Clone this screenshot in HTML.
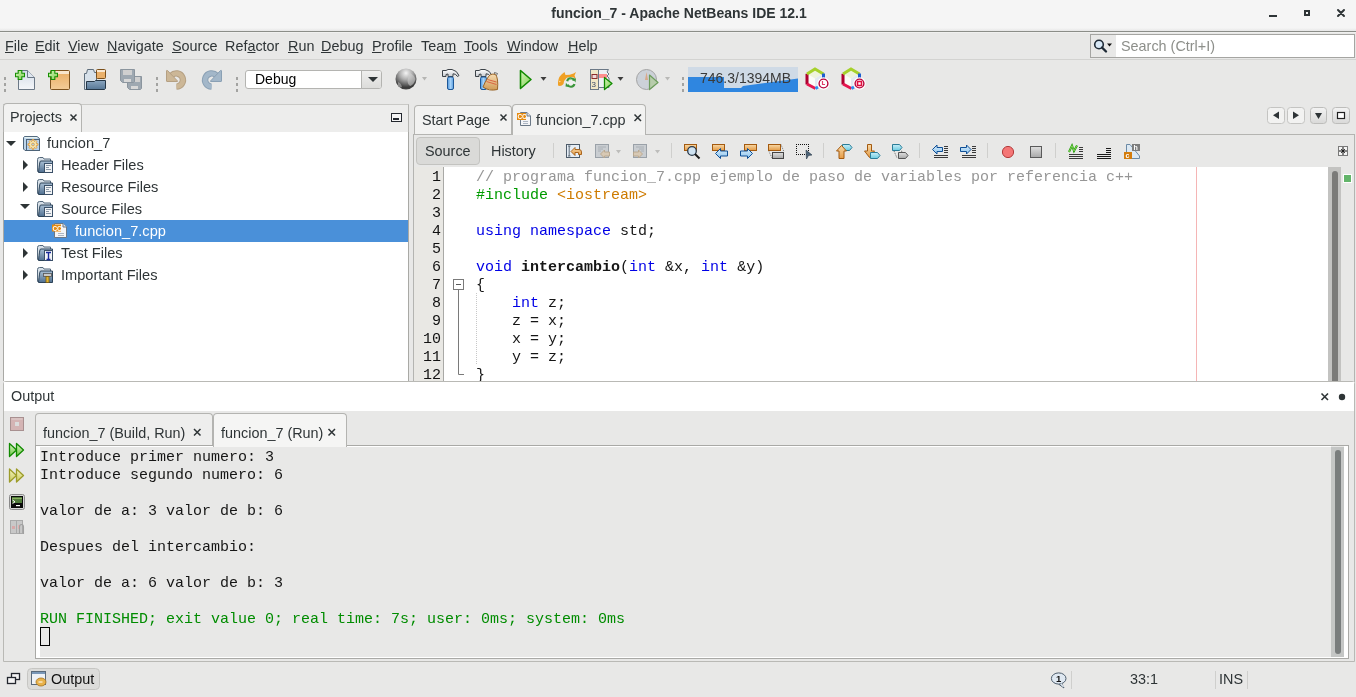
<!DOCTYPE html>
<html><head><meta charset="utf-8">
<style>
*{margin:0;padding:0;box-sizing:border-box}
html,body{width:1356px;height:697px;overflow:hidden;background:#e8e8e7;font-family:"Liberation Sans",sans-serif;color:#2e3436}
.a{position:absolute;will-change:transform}
#title{left:0;top:0;width:1356px;height:32px;background:linear-gradient(#f5f5f5 0,#f5f5f5 28px,#e6e6e6 31px);border-bottom:1px solid #8b8d88}
#title .t{left:1px;width:1356px;top:5px;text-align:center;font-weight:bold;font-size:14px;color:#2e3436;padding-left:0px}
#menu{left:0;top:32px;width:1356px;height:28px;background:#e8e8e7;border-top:1px solid #f0f0ef;border-bottom:1px solid #d3d3d1}
.mi{top:5px;font-size:14.4px;color:#2e3436;line-height:17px}
.mi u{text-decoration:underline;text-decoration-thickness:1px;text-underline-offset:1px}
.mono{font-family:"Liberation Mono",monospace}
.grip{width:2px;height:14px;background:repeating-linear-gradient(#9a9a98 0 2px,transparent 2px 6px)}
/* projects */
#proj{left:3px;top:104px;width:406px;height:277px;border:1px solid #a9a9a5;border-top:none;border-bottom:none;background:#fff}
#projtabs{left:3px;top:104px;width:406px;height:28px;background:#ededec;border-top:1px solid #c9c9c6;border-right:1px solid #b6b6b3}
.ptab{background:#f2f2f1;border:1px solid #b4b4b1;border-bottom:none;border-radius:4px 4px 0 0}
.tt{font-size:14.4px;color:#2e3436;white-space:nowrap}
.tr{height:22px;font-size:14.6px;color:#2e3436;white-space:nowrap;line-height:22px}
.sel{background:#4a90d9;color:#fff}
/* editor */
#edframe{left:413px;top:134px;width:942px;height:248px;border:1px solid #b4b4b1;border-bottom:none;background:#e8e8e7}
#gutter{left:414px;top:167px;width:30px;height:214px;background:#e9e8e4;border-right:1px solid #a9a9a6}
#code{left:444px;top:167px;width:884px;height:214px;background:#fff;overflow:hidden}
.ln{font-family:"Liberation Mono",monospace;font-size:15px;line-height:18px;color:#111;text-align:right;width:27px}
.cl{font-family:"Liberation Mono",monospace;font-size:15px;line-height:18px;color:#161616;white-space:pre}
.cm{color:#969696}.pp{color:#009b00}.st{color:#ce7b00}.kw{color:#0000e6}.b{font-weight:bold}
/* output */
#out{left:3px;top:381px;width:1352px;height:281px;border:1px solid #b9b9b5;border-radius:3px 3px 0 0;background:#e8e8e7}
#outhdr{left:4px;top:382px;width:1350px;height:29px;background:#fff}
.ol{font-family:"Liberation Mono",monospace;font-size:15px;line-height:18px;color:#161616;white-space:pre}
</style></head><body>
<div id="title" class="a"><div class="t a">funcion_7 - Apache NetBeans IDE 12.1</div></div>
<div id="menu" class="a">
<div class="mi a" style="left:5px"><u>F</u>ile</div>
<div class="mi a" style="left:35px"><u>E</u>dit</div>
<div class="mi a" style="left:68px"><u>V</u>iew</div>
<div class="mi a" style="left:107px"><u>N</u>avigate</div>
<div class="mi a" style="left:172px"><u>S</u>ource</div>
<div class="mi a" style="left:225px">Ref<u>a</u>ctor</div>
<div class="mi a" style="left:288px"><u>R</u>un</div>
<div class="mi a" style="left:321px"><u>D</u>ebug</div>
<div class="mi a" style="left:372px"><u>P</u>rofile</div>
<div class="mi a" style="left:421px">Tea<u>m</u></div>
<div class="mi a" style="left:464px"><u>T</u>ools</div>
<div class="mi a" style="left:507px"><u>W</u>indow</div>
<div class="mi a" style="left:568px"><u>H</u>elp</div>
</div>
<div class="a" style="left:1269px;top:15px;width:8px;height:2px;background:#2e3436"></div>
<div class="a" style="left:1304px;top:10px;width:6px;height:6px;border:2px solid #2e3436"></div>
<svg class="a" style="left:1336px;top:8px" width="10" height="10"><path d="M2 2L8 8M8 2L2 8" stroke="#2e3436" stroke-width="2" stroke-linecap="round"/></svg>
<div class="a" style="left:1090px;top:34px;width:265px;height:24px;border:1px solid #a5a5a2;background:#fff"></div>
<div class="a" style="left:1091px;top:35px;width:25px;height:22px;background:#e8e8e7"></div>
<div class="a" style="left:1121px;top:38px;font-size:14.4px;color:#8d8f8a;white-space:nowrap">Search (Ctrl+I)</div>

<svg class="a" style="left:0;top:0" width="1356" height="102" viewBox="0 0 1356 102">
<defs>
<linearGradient id="gPage" x1="0" y1="0" x2="0" y2="1"><stop offset="0" stop-color="#d3dce8"/><stop offset="1" stop-color="#f4f6f9"/></linearGradient>
<linearGradient id="gOrange" x1="0" y1="0" x2="0" y2="1"><stop offset="0" stop-color="#e9ad62"/><stop offset="1" stop-color="#f3cc98"/></linearGradient>
<linearGradient id="gGreen" x1="0" y1="0" x2="1" y2="1"><stop offset="0" stop-color="#d6f5b8"/><stop offset="1" stop-color="#7fcf55"/></linearGradient>
<linearGradient id="gBlueF" x1="0" y1="0" x2="0" y2="1"><stop offset="0" stop-color="#8aa5bf"/><stop offset="1" stop-color="#577796"/></linearGradient>
<radialGradient id="gGlobe" cx="0.5" cy="0.22" r="0.85"><stop offset="0" stop-color="#f4f4f4"/><stop offset="0.35" stop-color="#b0b0b0"/><stop offset="0.8" stop-color="#3a3a3a"/><stop offset="1" stop-color="#4a4a4a"/></radialGradient>
<linearGradient id="gHead" x1="0" y1="0" x2="0" y2="1"><stop offset="0" stop-color="#ffffff"/><stop offset="1" stop-color="#c9cdd2"/></linearGradient>
<linearGradient id="gHandle" x1="0" y1="0" x2="1" y2="0"><stop offset="0" stop-color="#4f96dc"/><stop offset="0.5" stop-color="#a6d2f8"/><stop offset="1" stop-color="#5a9edf"/></linearGradient>
<linearGradient id="gBroom" x1="0" y1="0" x2="0" y2="1"><stop offset="0" stop-color="#f6dcb2"/><stop offset="1" stop-color="#d09a55"/></linearGradient>
<symbol id="plus" viewBox="0 0 11 11"><path d="M3.5 0.5h4v3h3v4h-3v3h-4v-3h-3v-4h3z" fill="url(#gGreen)" stroke="#138f00" stroke-width="1.2"/></symbol>
</defs>
<!-- grips -->
<g fill="#a3a3a1">
<rect x="4" y="77" width="2" height="3"/><rect x="4" y="83" width="2" height="3"/><rect x="4" y="89" width="2" height="3"/>
<rect x="156" y="77" width="2" height="3"/><rect x="156" y="83" width="2" height="3"/><rect x="156" y="89" width="2" height="3"/>
<rect x="236" y="77" width="2" height="3"/><rect x="236" y="83" width="2" height="3"/><rect x="236" y="89" width="2" height="3"/>
<rect x="682" y="77" width="2" height="3"/><rect x="682" y="83" width="2" height="3"/><rect x="682" y="89" width="2" height="3"/>
</g>
<!-- new file -->
<path d="M18.5 70.5H27.5L34.5 77.5V89.5H18.5Z" fill="url(#gPage)" stroke="#6b7886"/>
<path d="M27.5 70.5V77.5H34.5" fill="#dfe6ef" stroke="#6b7886"/>
<use href="#plus" x="15" y="70" width="10" height="10"/>
<!-- new project -->
<rect x="50.5" y="70.5" width="19" height="19" rx="1" fill="url(#gOrange)" stroke="#7d531f"/>
<rect x="51" y="71" width="18" height="3" fill="#f8e6cc"/>
<use href="#plus" x="48" y="70" width="10" height="10"/>
<!-- open project -->
<path d="M84.5 73.5H86.5L87.5 69.5H93.5L94.5 72.5H96.5V89.5H84.5Z" fill="#d7e1ea" stroke="#5d6d7c"/>
<rect x="96.5" y="69.5" width="9" height="9" rx="1" fill="#eab06a" stroke="#7a4f1b"/>
<rect x="97" y="70" width="8" height="2" fill="#f9e8d2"/>
<path d="M86.5 81.5H94.5L95.5 80.5H105.5V88.5L104.5 89.5H86.5Z" fill="url(#gBlueF)" stroke="#263747"/>
<!-- save all (disabled) -->
<g fill="#9ea8b1" stroke="#8b959e">
<path d="M127.5 76.5H141.5V88.5L140.5 89.5H129.5L127.5 87.5Z"/>
<path d="M120.5 69.5H134.5V81.5L133.5 82.5H122.5L120.5 80.5Z"/>
</g>
<rect x="123" y="70" width="9" height="5" fill="#cfcfcf"/><rect x="124" y="79" width="7" height="3" fill="#d8d8d8"/>
<rect x="135" y="77" width="5" height="5" fill="#cfcfcf"/><rect x="131" y="86" width="7" height="3" fill="#d8d8d8"/>
<!-- undo -->
<path d="M171.5 75.5 A6.6 6.6 0 1 1 176.5 86.6" fill="none" stroke="#b5a083" stroke-width="6.4"/>
<path d="M171.5 75.5 A6.6 6.6 0 1 1 176.5 86.6" fill="none" stroke="#ccb797" stroke-width="4.4"/>
<path d="M166.5 71 Q166.5 70 167.5 70.5 L177.5 81 Q178 81.5 177 81.5 L167 81.5 Q166.5 81.5 166.5 81Z" fill="#ccb797" stroke="#b5a083"/>
<!-- redo -->
<path d="M216.5 75.5 A6.6 6.6 0 1 0 211.5 86.6" fill="none" stroke="#8aa0b4" stroke-width="6.4"/>
<path d="M216.5 75.5 A6.6 6.6 0 1 0 211.5 86.6" fill="none" stroke="#a3b7c9" stroke-width="4.4"/>
<path d="M221.5 71 Q221.5 70 220.5 70.5 L210.5 81 Q210 81.5 211 81.5 L221 81.5 Q221.5 81.5 221.5 81Z" fill="#a3b7c9" stroke="#8aa0b4"/>
<!-- globe -->
<circle cx="406" cy="79" r="10.5" fill="url(#gGlobe)"/>
<path d="M410 73 q4 2 5.5 6 q-1 5 -5 7 q-3 -1 -3 -6 q1 -4 2.5 -7z" fill="#d2d2d2" opacity="0.55"/><path d="M398 82 q3 1 4 5 q-2 1 -4 -1z" fill="#b8b8b8" opacity="0.6"/>
<path d="M422 77h5l-2.5 3.5z" fill="#b5b5b3"/>
<!-- hammer -->
<path d="M442.5 70.5 H446 Q447 69 452 69.5 Q457 70.5 459 75.5 L457.5 76.5 Q455.5 73.5 453 73.8 V76.5 H448 V74 L446 74.5 V76.5 H442.5 Z" fill="url(#gHead)" stroke="#3c4248" stroke-linejoin="round"/>
<rect x="447.5" y="77" width="6" height="12.5" rx="1.5" fill="url(#gHandle)" stroke="#1d5797"/>
<!-- clean & build -->
<path d="M475.5 70.5 H479 Q480 69 485 69.5 Q490 70.5 492 75.5 L490.5 76.5 Q488.5 73.5 486 73.8 V76.5 H481 V74 L479 74.5 V76.5 H475.5 Z" fill="url(#gHead)" stroke="#3c4248" stroke-linejoin="round"/>
<rect x="480.5" y="77" width="6" height="12.5" rx="1.5" fill="url(#gHandle)" stroke="#1d5797"/>
<path d="M494.5 72.5 L497.5 73.5 L495 78Z" fill="#e8e8e8" stroke="#555" stroke-width="0.8"/>
<path d="M487 79 Q490 72.5 495.5 74.5 Q498.5 78 497.5 89.5 Q489 91.5 483 87 Q484.5 83 487 79Z" fill="url(#gBroom)" stroke="#9a6426"/>
<path d="M487.5 79.5 L496.5 82 M486.5 81.5 L496.5 84.5" stroke="#d85a3a" stroke-width="0.9"/>
<!-- run -->
<path d="M520.5 70.5 L531 79.5 L520.5 88.5Z" fill="url(#gGreen)" stroke="#118a00" stroke-width="1.6" stroke-linejoin="round"/>
<path d="M540.5 77h6l-3 3.8z" fill="#3c3c3c"/>
<!-- apply code changes fish -->
<path d="M558 85.5 Q557.5 78 561.5 74.5 L564.5 72 L565.5 75 Q570 75 573.5 73.5 L576 72 L574.5 75.5 L575.8 78.8 L573 77.2 Q569 76.5 566.5 78 Q564 80 563.5 84 Q561 86.8 558 85.5Z" fill="#f0a024"/>
<circle cx="559.8" cy="81.5" r="0.7" fill="#fbe0b0"/>
<circle cx="570.8" cy="82.6" r="4.6" fill="#fff" opacity="0.35"/>
<path d="M567.2 81.2 A3.6 3.6 0 0 1 574 80.6" fill="none" stroke="#3c963c" stroke-width="2.2"/>
<path d="M574.4 84 A3.6 3.6 0 0 1 567.6 84.6" fill="none" stroke="#3c963c" stroke-width="2.2"/>
<path d="M572.5 78.2 L576 78.5 L575.5 82.5Z" fill="#3c963c"/>
<path d="M569 87 L565.5 86.6 L566 82.8Z" fill="#3c963c"/>
<path d="M568.5 80.5 A2.8 2.8 0 0 1 572.5 79.8" fill="none" stroke="#a6dca6" stroke-width="0.8"/>
<!-- test/profile -->
<rect x="590.5" y="69.5" width="8" height="20" fill="#f1e7c6" stroke="#6b7886"/>
<path d="M598.5 69.5H608.5L607 72L609 74L607 76L609 78V87.5H598.5Z" fill="#eef0f4" stroke="#6b7886"/>
<rect x="599" y="74" width="8" height="4" fill="#ff8f8f"/>
<rect x="592" y="74.5" width="5" height="4" fill="#f0d8d8" stroke="#8a2a2a"/>
<text x="591.5" y="87" font-family="Liberation Sans" font-size="8" fill="#3a4a6a">3</text>
<path d="M604.5 77.5 L612 83.5 L604.5 89.5Z" fill="url(#gGreen)" stroke="#118a00" stroke-width="1.3" stroke-linejoin="round"/>
<path d="M617.5 77h6l-3 3.8z" fill="#3c3c3c"/>
<!-- profile clock -->
<circle cx="646.5" cy="79.5" r="10" fill="#ccd1d8" stroke="#a3a3a3"/>
<path d="M646.5 72 L648 80 H645Z" fill="#d9a88a"/>
<path d="M649.5 75 L658 82.5 L649.5 89.5Z" fill="#b7ccab" stroke="#6d9d5d" stroke-width="1.2" stroke-linejoin="round"/>
<path d="M665 77h5l-2.5 3.5z" fill="#b9b9b7"/>
<!-- memory bar -->
<rect x="688" y="67" width="110" height="25" fill="#cfdae6"/>
<path d="M688 77 H724 V88 H741 L743 86 L798 78.5 V92 H688Z" fill="#2f86e0"/>
<!-- nb icons -->
<g id="nb1">
<path d="M808.5 74.5 L815 70.5 L821.5 74.5 V83.5 L815 87.5 L808.5 83.5Z" fill="#fbfcf8"/>
<path d="M808.5 74.5 L815 70.5 L821.5 74.5 L815 78.5Z" fill="#eef4dc"/>
<path d="M815 78.5 L821.5 74.5 V83.5 L815 87.5Z" fill="#e2eaf2"/>
<path d="M807 84.5 V73.8" stroke="#ae0030" stroke-width="3" fill="none"/>
<path d="M807 74 L815 69 L823.5 74" stroke="#a6d12b" stroke-width="3" fill="none" stroke-linejoin="miter"/>
<path d="M807 84 L815.5 88.5" stroke="#e5164f" stroke-width="3" fill="none"/>
<path d="M823.5 73.5 V79" stroke="#1c5ed0" stroke-width="3" fill="none"/>
<path d="M815.5 88.5 L818 87" stroke="#2b8ef0" stroke-width="3" fill="none"/>
<circle cx="823.5" cy="83.5" r="6.2" fill="#fff"/>
<circle cx="823.5" cy="83.5" r="4.4" fill="none" stroke="#b8063d" stroke-width="1.4"/>
</g>
<path d="M822.5 81 V84.5 H825" fill="none" stroke="#e0406a" stroke-width="1.2"/>
<use href="#nb1" x="36" y="0"/>
<rect x="857.5" y="81.5" width="4" height="4" fill="#fff" stroke="#e01040" stroke-width="1.6"/>
</svg>
<div class="a" style="left:245px;top:70px;width:137px;height:19px;border:1px solid #b4b4b1;border-radius:3px;background:#fff"></div>
<div class="a" style="left:361px;top:71px;width:20px;height:17px;border-left:1px solid #b4b4b1;background:linear-gradient(#efefee,#dcdcda);border-radius:0 2px 2px 0"></div>
<svg class="a" style="left:366px;top:75px" width="14" height="8"><path d="M2 2h10l-5 5z" fill="#2e3436"/></svg>
<div class="a" style="left:255px;top:71px;font-size:14px;color:#000;white-space:nowrap">Debug</div>
<div class="a" style="left:700px;top:70px;font-size:14px;color:#3a3a3a;white-space:nowrap">746.3/1394MB</div>

<!-- projects panel -->
<div id="proj" class="a"></div>
<div id="projtabs" class="a"></div>
<div class="a ptab" style="left:3px;top:103px;width:79px;height:29px;z-index:1"></div>
<div class="a tt" style="left:10px;top:109px;z-index:2">Projects</div>
<div class="a" style="left:4px;top:220px;width:404px;height:22px;background:#4a90d9"></div>
<div class="a tr" style="left:47px;top:132px">funcion_7</div>
<div class="a tr" style="left:61px;top:154px">Header Files</div>
<div class="a tr" style="left:61px;top:176px">Resource Files</div>
<div class="a tr" style="left:61px;top:198px">Source Files</div>
<div class="a tr" style="left:75px;top:220px;color:#fff">funcion_7.cpp</div>
<div class="a tr" style="left:61px;top:242px">Test Files</div>
<div class="a tr" style="left:61px;top:264px">Important Files</div>
<svg class="a" style="left:0;top:130px" width="80" height="160" viewBox="0 130 80 160">
<defs>
<linearGradient id="gFold" x1="0" y1="0" x2="0" y2="1"><stop offset="0" stop-color="#a9bfd4"/><stop offset="1" stop-color="#4f6f90"/></linearGradient>
<symbol id="folder" viewBox="0 0 16 16">
<path d="M0.5 2.5 Q0.5 0.5 2.5 0.5 H6 L7 2 H13.5 V14.5 H0.5Z" fill="#d7e0e8" stroke="#55697c"/>
<path d="M1.5 15.5 Q2.5 4.5 3.5 4 H15.5 V15.5Z" fill="url(#gFold)" stroke="#2c4358"/>
</symbol>
<symbol id="fdoc" viewBox="0 0 16 16">
<use href="#folder" width="16" height="16"/>
<rect x="7.5" y="6.5" width="8" height="9" fill="#f2f4f6" stroke="#3b5068"/>
<path d="M9 8.5h5M9 10.5h3M9 12.5h5" stroke="#8a98a8" stroke-width="1"/>
</symbol>
</defs>
<!-- arrows -->
<path d="M6 141h10l-5 5z" fill="#2e3436"/>
<path d="M23 160v10l5-5z" fill="#2e3436"/>
<path d="M23 182v10l5-5z" fill="#2e3436"/>
<path d="M20 204h10l-5 5z" fill="#2e3436"/>
<path d="M23 248v10l5-5z" fill="#2e3436"/>
<path d="M23 270v10l5-5z" fill="#2e3436"/>
<!-- project icon -->
<path d="M23.5 137.5 L24.5 136.5 H37 L39.5 138.5 V150.5 H25 L23.5 149Z" fill="#bcd4ea" stroke="#4d6378"/>
<rect x="26.5" y="139.5" width="13" height="11" fill="#b4d2f0" stroke="#4d6378"/>
<path d="M25 137.6 H37.3" stroke="#e4f2f2" stroke-width="1.3"/>
<path d="M32.21 140.99 L32.20 139.56 L33.80 139.56 L33.79 140.99 L34.93 141.46 L35.93 140.45 L37.05 141.57 L36.04 142.57 L36.51 143.71 L37.94 143.70 L37.94 145.30 L36.51 145.29 L36.04 146.43 L37.05 147.43 L35.93 148.55 L34.93 147.54 L33.79 148.01 L33.80 149.44 L32.20 149.44 L32.21 148.01 L31.07 147.54 L30.07 148.55 L28.95 147.43 L29.96 146.43 L29.49 145.29 L28.06 145.30 L28.06 143.70 L29.49 143.71 L29.96 142.57 L28.95 141.57 L30.07 140.45 L31.07 141.46Z" fill="#f3e7b4" stroke="#e29a36" stroke-width="0.9" stroke-linejoin="round"/>
<circle cx="33" cy="144.5" r="1.4" fill="#a9d0f2" stroke="#e29a36" stroke-width="0.8"/>
<!-- folders -->
<use href="#fdoc" x="37" y="157" width="16" height="16"/>
<use href="#fdoc" x="37" y="179" width="16" height="16"/>
<use href="#fdoc" x="37" y="201" width="16" height="16"/>
<use href="#folder" x="37" y="245" width="16" height="16"/>
<rect x="44.5" y="250.5" width="8" height="10" fill="#f2f4f6" stroke="#3b5068"/>
<path d="M46 252.5h5M48.5 252.5v7M46.5 259.5h4" stroke="#1a2a9a" stroke-width="1.4"/>
<use href="#folder" x="37" y="267" width="16" height="16"/>
<rect x="43.5" y="273.5" width="8" height="3" fill="#c9c9c9" stroke="#555" stroke-width="0.8"/>
<rect x="46" y="276.5" width="3" height="6" fill="#e0b430" stroke="#7a5a10" stroke-width="0.8"/>
<!-- cpp file icon -->
<path d="M54.5 223.5 H63 L66.5 227 V237.5 H54.5Z" fill="#f4f5f7" stroke="#6b7886"/>
<path d="M63 223.5 V227 H66.5" fill="#dde3ea" stroke="#6b7886"/>
<path d="M58 233.5h6M58 235.5h6" stroke="#9aa6b4" stroke-width="0.8"/>
<rect x="52" y="224.5" width="9" height="7" fill="#e58a0f"/>
<text x="52.6" y="230.6" font-family="Liberation Sans" font-size="6.4" font-weight="bold" fill="#fff" letter-spacing="-0.3">CC</text>
</svg>
<div class="a" style="left:391px;top:113px;width:11px;height:9px;border:1px solid #23272e;background:#f4f4f4;z-index:3"></div>
<div class="a" style="left:393px;top:118px;width:6px;height:2px;background:#23272e;z-index:3"></div>
<svg class="a" style="left:69px;top:113px;z-index:3" width="10" height="10"><path d="M1.5 1.5L7.5 7.5M7.5 1.5L1.5 7.5" stroke="#2e3436" stroke-width="1.5"/></svg>

<!-- editor -->
<div class="a ptab" style="left:414px;top:105px;width:98px;height:29px"></div>
<div class="a tt" style="left:422px;top:112px">Start Page</div>
<div class="a ptab" style="left:512px;top:104px;width:134px;height:31px;z-index:2"></div>
<div class="a tt" style="left:536px;top:112px;z-index:3">funcion_7.cpp</div>
<div id="edframe" class="a"></div>
<div class="a" style="left:416px;top:137px;width:64px;height:28px;border:1px solid #c3c3c0;border-radius:4px;background:#dadad8"></div>
<div class="a tt" style="left:425px;top:143px">Source</div>
<div class="a tt" style="left:491px;top:143px">History</div>
<svg class="a" style="left:0;top:100px;z-index:5" width="1356" height="67" viewBox="0 100 1356 67">
<defs>
<linearGradient id="gOr2" x1="0" y1="0" x2="0" y2="1"><stop offset="0" stop-color="#f8d9a8"/><stop offset="1" stop-color="#e49b45"/></linearGradient>
<linearGradient id="gBl2" x1="0" y1="0" x2="0" y2="1"><stop offset="0" stop-color="#d8ecfb"/><stop offset="1" stop-color="#8cc4ee"/></linearGradient>
<linearGradient id="gCy" x1="0" y1="0" x2="0" y2="1"><stop offset="0" stop-color="#c8eef8"/><stop offset="1" stop-color="#6ccbe0"/></linearGradient>
<linearGradient id="gGr2" x1="0" y1="0" x2="0" y2="1"><stop offset="0" stop-color="#e0e0e0"/><stop offset="1" stop-color="#a8a8a8"/></linearGradient>
<linearGradient id="gBtn" x1="0" y1="0" x2="0" y2="1"><stop offset="0" stop-color="#f3f3f3"/><stop offset="1" stop-color="#d9d9d8"/></linearGradient>
<symbol id="orect" viewBox="0 0 13 7"><rect x="0.5" y="0.5" width="12" height="6" fill="url(#gOr2)" stroke="#a35a10"/></symbol>
</defs>
<!-- separators -->
<g fill="#cfcfcd">
<rect x="553" y="143" width="1" height="15"/><rect x="671" y="143" width="1" height="15"/>
<rect x="823" y="143" width="1" height="15"/><rect x="919" y="143" width="1" height="15"/>
<rect x="987" y="143" width="1" height="15"/><rect x="1055" y="143" width="1" height="15"/>
</g>
<!-- last edit -->
<rect x="566.5" y="144.5" width="13" height="13" fill="#e6eef6" stroke="#4e5c6a"/>
<path d="M568 146h2.5M569.2 146v10M568 156h2.5" stroke="#4e5c6a" stroke-width="0.9"/>
<path d="M571 151.5 L575 147.5 V149.5 H579 Q581.5 149.5 581.5 152 V154.5 H578.5 V152.5 H575 V155.5Z" fill="url(#gOr2)" stroke="#a35a10" stroke-width="0.9"/>
<!-- back/forward disabled -->
<rect x="595.5" y="144.5" width="13" height="13" fill="#c9cdd1" stroke="#9aa1a8"/>
<path d="M598 147h8M598 149h5M598 151h3" stroke="#aab0b6" stroke-width="1"/>
<path d="M600.5 154 L604.5 150 V152 H609.5 V156 H604.5 V158Z" fill="#d8c9b4" stroke="#b8a68c" stroke-width="0.9"/>
<path d="M616 150h5l-2.5 3.5z" fill="#bdbdbb"/>
<rect x="633.5" y="144.5" width="13" height="13" fill="#c9cdd1" stroke="#9aa1a8"/>
<path d="M636 147h8M639 149h5M641 151h3" stroke="#aab0b6" stroke-width="1"/>
<path d="M642.5 154 L638.5 150 V152 H633.5 V156 H638.5 V158Z" fill="#d8c9b4" stroke="#b8a68c" stroke-width="0.9"/>
<path d="M655 150h5l-2.5 3.5z" fill="#bdbdbb"/>
<!-- find -->
<use href="#orect" x="684" y="144" width="13" height="7"/>
<circle cx="692" cy="151" r="4.3" fill="#cfe3f2" stroke="#2a3a4a" stroke-width="1.3"/>
<path d="M695 154 L699.5 158.5" stroke="#1a1a1a" stroke-width="2"/>
<!-- find prev -->
<use href="#orect" x="712" y="144" width="13" height="7"/>
<path d="M715.5 153.5 L720.5 148.5 V151 H727.5 V156 H720.5 V158.5Z" fill="url(#gBl2)" stroke="#0e4f96"/>
<!-- find next -->
<use href="#orect" x="744" y="144" width="13" height="7"/>
<path d="M752.5 153.5 L747.5 148.5 V151 H740.5 V156 H747.5 V158.5Z" fill="url(#gBl2)" stroke="#0e4f96"/>
<!-- toggle highlight -->
<use href="#orect" x="768" y="144" width="13" height="7"/>
<rect x="772.5" y="152.5" width="11" height="6" fill="url(#gGr2)" stroke="#444"/>
<path d="M769 151.5 L772 158M781 144.5 L784 152" stroke="#555" stroke-width="0.8" stroke-dasharray="1 1"/>
<!-- rect select -->
<g fill="#111"><rect x="796" y="144" width="1" height="1"/><rect x="796" y="154" width="1" height="1"/><rect x="798" y="144" width="1" height="1"/><rect x="798" y="154" width="1" height="1"/><rect x="800" y="144" width="1" height="1"/><rect x="800" y="154" width="1" height="1"/><rect x="802" y="144" width="1" height="1"/><rect x="802" y="154" width="1" height="1"/><rect x="804" y="144" width="1" height="1"/><rect x="804" y="154" width="1" height="1"/><rect x="806" y="144" width="1" height="1"/><rect x="806" y="154" width="1" height="1"/><rect x="808" y="144" width="1" height="1"/><rect x="808" y="154" width="1" height="1"/><rect x="796" y="146" width="1" height="1"/><rect x="808" y="146" width="1" height="1"/><rect x="796" y="148" width="1" height="1"/><rect x="808" y="148" width="1" height="1"/><rect x="796" y="150" width="1" height="1"/><rect x="808" y="150" width="1" height="1"/><rect x="796" y="152" width="1" height="1"/><rect x="808" y="152" width="1" height="1"/></g>
<path d="M806 150 L812 155 L808.5 155.5 L806.5 159Z" fill="#4b6277" stroke="#2a3a4a" stroke-width="0.6"/>
<!-- prev bookmark -->
<path d="M842.5 144.5 H849.5 L852 147.5 L849.5 150.5 H842.5Z" fill="url(#gCy)" stroke="#2a7d98"/>
<path d="M841.5 145.5 L846.5 151 H844 V158.5 H839 V151 H836.5Z" fill="url(#gOr2)" stroke="#a35a10"/>
<!-- next bookmark -->
<path d="M867.5 144.5 H871.5 V151 H874.5 L869.5 157.5 L864.5 151 H867.5Z" fill="url(#gOr2)" stroke="#a35a10"/>
<path d="M870.5 152.5 H877.5 L880 155.5 L877.5 158.5 H870.5Z" fill="url(#gCy)" stroke="#2a7d98"/>
<!-- toggle bookmark -->
<path d="M892.5 144.5 H899.5 L902 147.5 L899.5 150.5 H892.5Z" fill="url(#gCy)" stroke="#2a7d98"/>
<path d="M898.5 152.5 H905.5 L908 155.5 L905.5 158.5 H898.5Z" fill="url(#gGr2)" stroke="#555"/>
<path d="M894 151 L897 158M901 151 L903 152" stroke="#444" stroke-width="0.8" stroke-dasharray="1 1"/>
<!-- shift left -->
<path d="M932.5 149.5 L937 145 V147.5 H942.5 V151.5 H937 V154Z" fill="url(#gBl2)" stroke="#0e4f96"/>
<path d="M944 146.5h4M944 148.5h4M944 150.5h4M944 152.5h4M934 155.5h14M934 157.5h14" stroke="#3a3a3a" stroke-width="1.1"/>
<!-- shift right -->
<path d="M971 149.5 L966.5 145 V147.5 H960.5 V151.5 H966.5 V154Z" fill="url(#gBl2)" stroke="#0e4f96"/>
<path d="M972 146.5h4M972 148.5h4M972 150.5h4M972 152.5h4M962 155.5h14M962 157.5h14" stroke="#3a3a3a" stroke-width="1.1"/>
<!-- record / stop -->
<circle cx="1008" cy="152" r="5.6" fill="#f47676" stroke="#b23a3a"/>
<rect x="1030.5" y="146.5" width="11" height="11" fill="url(#gGr2)" stroke="#5a5a5a"/>
<!-- format -->
<path d="M1069 152 L1072 145.5 L1074 151 L1077 145.5" fill="none" stroke="#1b9a00" stroke-width="2"/>
<path d="M1069 152 L1072 145.5 L1074 151 L1077 145.5" fill="none" stroke="#9be070" stroke-width="0.8"/>
<path d="M1079 147.5h4M1079 149.5h4M1079 151.5h4M1069 154.5h14M1069 156.5h14M1069 158.5h14" stroke="#3a3a3a" stroke-width="1.1"/>
<path d="M1106 148.5h5M1106 150.5h5M1106 152.5h5M1097 154.5h14M1097 156.5h14M1097 158.5h14" stroke="#1a1a1a" stroke-width="1.2"/>
<!-- c/h switch -->
<path d="M1126.5 144.5 H1130 L1139.5 156 V158.5 H1126.5Z" fill="#dce8f2" stroke="#6b8aa6"/>
<rect x="1132" y="144" width="8" height="7" fill="#7d7d7d"/>
<text x="1133.5" y="150.3" font-family="Liberation Sans" font-weight="bold" font-size="7" fill="#fff">h</text>
<rect x="1124" y="152" width="8" height="7" fill="#d37c0c"/>
<text x="1125.5" y="158.3" font-family="Liberation Sans" font-weight="bold" font-size="7" fill="#fff">c</text>
<!-- split icon -->
<rect x="1338.5" y="146.5" width="9" height="9" fill="#f4f4f4" stroke="#7a7a7a"/>
<path d="M1343 147v8M1339 151h8" stroke="#111" stroke-width="1"/>
<path d="M1341 149l2 2l2-2M1341 153l2-2l2 2" fill="none" stroke="#111" stroke-width="0.8"/>
<!-- tab nav buttons -->
<rect x="1267.5" y="107.5" width="17" height="16" rx="3" fill="#f2f2f1" stroke="#c4c4c2"/>
<path d="M1279 111.5 V119 L1273 115.2Z" fill="#2e3436"/>
<rect x="1287.5" y="107.5" width="17" height="16" rx="3" fill="#f2f2f1" stroke="#c4c4c2"/>
<path d="M1293 111.5 V119 L1299 115.2Z" fill="#2e3436"/>
<rect x="1310.5" y="107.5" width="16" height="16" rx="3" fill="url(#gBtn)" stroke="#bdbdbb"/>
<path d="M1315 113 H1322 L1318.5 119Z" fill="#2e3436"/>
<rect x="1332.5" y="107.5" width="17" height="16" rx="3" fill="url(#gBtn)" stroke="#bdbdbb"/>
<rect x="1337.5" y="112.5" width="7" height="6" fill="#fff" stroke="#222" stroke-width="1.2"/>
<!-- tab close x -->
<path d="M500.5 114.5L506.5 120.5M506.5 114.5L500.5 120.5" stroke="#2e3436" stroke-width="1.5"/>
<path d="M634.5 114.5L641 121M641 114.5L634.5 121" stroke="#2e3436" stroke-width="1.5"/>
<!-- cpp tab icon -->
<path d="M520.5 112.5 H527 L530.5 116 V125.5 H520.5Z" fill="#f4f5f7" stroke="#6b7886"/>
<path d="M527 112.5 V116 H530.5" fill="#dde3ea" stroke="#6b7886"/>
<path d="M523 121.5h5M523 123.5h5" stroke="#9aa6b4" stroke-width="0.8"/>
<rect x="517" y="113" width="9" height="7" fill="#e58a0f"/>
<text x="517.6" y="119" font-family="Liberation Sans" font-size="6.4" font-weight="bold" fill="#fff" letter-spacing="-0.3">CC</text>
</svg>

<div id="gutter" class="a"></div>
<div id="code" class="a"></div>
<div class="a" style="left:414px;top:169px">
<div class="ln">1</div><div class="ln">2</div><div class="ln">3</div><div class="ln">4</div><div class="ln">5</div><div class="ln">6</div><div class="ln">7</div><div class="ln">8</div><div class="ln">9</div><div class="ln">10</div><div class="ln">11</div><div class="ln">12</div>
</div>
<div class="a" style="left:476px;top:169px;height:212px;overflow:hidden">
<div class="cl cm">// programa funcion_7.cpp ejemplo de paso de variables por referencia c++</div>
<div class="cl"><span class="pp">#include </span><span class="st">&lt;iostream&gt;</span></div>
<div class="cl"> </div>
<div class="cl"><span class="kw">using</span> <span class="kw">namespace</span> std;</div>
<div class="cl"> </div>
<div class="cl"><span class="kw">void</span> <span class="b">intercambio</span>(<span class="kw">int</span> &amp;x, <span class="kw">int</span> &amp;y)</div>
<div class="cl">{</div>
<div class="cl">    <span class="kw">int</span> z;</div>
<div class="cl">    z = x;</div>
<div class="cl">    x = y;</div>
<div class="cl">    y = z;</div>
<div class="cl">}</div>
</div>
<div class="a" style="left:1196px;top:167px;width:1px;height:214px;background:#f5b5b5"></div>
<div class="a" style="left:1328px;top:167px;width:13px;height:214px;background:#c3c3c1"></div>
<div class="a" style="left:1332px;top:171px;width:6px;height:214px;border-radius:3px;background:#7b7b79"></div>
<div class="a" style="left:1341px;top:167px;width:12px;height:214px;background:#e8e8e7"></div>
<div class="a" style="left:1343px;top:174px;width:9px;height:9px;background:#fff;border:1px solid #fff"></div>
<div class="a" style="left:1344px;top:175px;width:7px;height:7px;background:#63b56a"></div>
<svg class="a" style="left:444px;top:167px" width="40" height="214" viewBox="444 167 40 214">
<rect x="453.5" y="279.5" width="10" height="10" fill="#fff" stroke="#7a7a7a"/>
<path d="M456 284.5h5" stroke="#5a5a5a"/>
<path d="M458.5 290V374.5H464" fill="none" stroke="#7a7a7a"/>
<path d="M476.5 293V364" stroke="#c8c8c8" stroke-dasharray="1 1"/>
</svg>

<!-- output -->
<div id="out" class="a"></div>
<div id="outhdr" class="a"></div>
<div class="a tt" style="left:11px;top:388px">Output</div>
<svg class="a" style="left:1318px;top:390px" width="32" height="14"><path d="M3.5 3.5L10 10M10 3.5L3.5 10" stroke="#2e3436" stroke-width="1.6"/><circle cx="24" cy="7" r="3.2" fill="#2e3436"/></svg>
<!-- tabs -->
<div class="a" style="left:35px;top:413px;width:178px;height:33px;background:#eeeeed;border:1px solid #b4b4b1;border-bottom:none;border-radius:4px 4px 0 0"></div>
<div class="a" style="left:213px;top:413px;width:134px;height:34px;background:#f5f5f4;border:1px solid #b4b4b1;border-bottom:none;border-radius:4px 4px 0 0;z-index:2"></div>
<div class="a tt" style="left:43px;top:425px">funcion_7 (Build, Run)</div>
<div class="a tt" style="left:221px;top:425px;z-index:3">funcion_7 (Run)</div>
<svg class="a" style="left:190px;top:426px;z-index:3" width="150" height="12"><path d="M4 3L10.5 9.5M10.5 3L4 9.5" stroke="#2e3436" stroke-width="1.5"/><path d="M138.5 3L145 9.5M145 3L138.5 9.5" stroke="#2e3436" stroke-width="1.5"/></svg>
<!-- text area -->
<div class="a" style="left:35px;top:445px;width:1314px;height:214px;border:1px solid #a9a9a6;background:#e8e8e7"></div>
<div class="a" style="left:36px;top:446px;width:4px;height:212px;background:#fff"></div>
<div class="a" style="left:36px;top:446px;width:1295px;height:1px;background:#fff"></div>
<div class="a" style="left:36px;top:657px;width:1312px;height:1px;background:#fff"></div>
<div class="a" style="left:1331px;top:447px;width:13px;height:210px;background:#c4c6c5"></div>
<div class="a" style="left:1344px;top:446px;width:4px;height:212px;background:#fff"></div>
<div class="a" style="left:1335px;top:450px;width:6px;height:204px;border-radius:3px;background:#797d7d"></div>
<div class="a" style="left:40px;top:449px">
<div class="ol">Introduce primer numero: 3</div>
<div class="ol">Introduce segundo numero: 6</div>
<div class="ol"> </div>
<div class="ol">valor de a: 3 valor de b: 6</div>
<div class="ol"> </div>
<div class="ol">Despues del intercambio:</div>
<div class="ol"> </div>
<div class="ol">valor de a: 6 valor de b: 3</div>
<div class="ol"> </div>
<div class="ol" style="color:#008c00">RUN FINISHED; exit value 0; real time: 7s; user: 0ms; system: 0ms</div>
</div>
<div class="a" style="left:40px;top:627px;width:10px;height:19px;border:1px solid #000"></div>
<!-- side icons -->
<svg class="a" style="left:0;top:410px" width="34" height="130" viewBox="0 410 34 130">
<defs><linearGradient id="gG3" x1="0" y1="0" x2="0" y2="1"><stop offset="0" stop-color="#d9f7c0"/><stop offset="1" stop-color="#72c64a"/></linearGradient>
<linearGradient id="gY3" x1="0" y1="0" x2="0" y2="1"><stop offset="0" stop-color="#f5f5c0"/><stop offset="1" stop-color="#c8c85a"/></linearGradient></defs>
<rect x="10.5" y="417.5" width="13" height="13" fill="#d4b4b4" stroke="#a89090"/>
<rect x="11.5" y="418.5" width="11" height="1" fill="#e0d2d0"/>
<rect x="15" y="422" width="4" height="4" fill="#dcdcdc"/>
<path d="M9.5 443.5 L16.5 450 L9.5 456.5Z" fill="url(#gG3)" stroke="#118a00" stroke-width="1.3" stroke-linejoin="round"/>
<path d="M16.5 443.5 L23.5 450 L16.5 456.5Z" fill="url(#gG3)" stroke="#118a00" stroke-width="1.3" stroke-linejoin="round"/>
<path d="M9.5 469 L16.5 475.5 L9.5 482Z" fill="url(#gY3)" stroke="#9c9c2a" stroke-width="1.3" stroke-linejoin="round"/>
<path d="M16.5 469 L23.5 475.5 L16.5 482Z" fill="url(#gY3)" stroke="#9c9c2a" stroke-width="1.3" stroke-linejoin="round"/>
<rect x="9.5" y="494.5" width="15" height="15" rx="2" fill="#d8d8d8" stroke="#8a8a8a"/>
<rect x="11" y="496" width="12" height="12" fill="#0a0a0a"/>
<rect x="12" y="497" width="10" height="6" fill="#4f7a3a"/>
<rect x="12" y="498" width="10" height="1" fill="#8ab060"/>
<path d="M12.5 500l2.5 1.8l-2.5 1.8" fill="none" stroke="#fff" stroke-width="1"/>
<rect x="16" y="505" width="4" height="1.2" fill="#fff"/>
<g fill="#c8c8c8" stroke="#a9a9a9" stroke-width="1"><rect x="10.5" y="520.5" width="6" height="13"/><rect x="16.5" y="520.5" width="6" height="13"/></g>
<rect x="12" y="526" width="3" height="3" fill="#d8a8a8"/><rect x="18" y="525" width="2" height="4" fill="#e0b0b0"/>
<path d="M19.5 534 V527 Q19.5 524.5 21.5 524.5 Q23.5 524.5 23.5 527 V534" fill="none" stroke="#a0a0a0" stroke-width="1.1"/>
</svg>

<svg class="a" style="left:0;top:662px" width="1356" height="35" viewBox="0 662 1356 35">
<rect x="11.5" y="673.5" width="8" height="6" fill="#f4f4f4" stroke="#23272e" stroke-width="1.3"/>
<rect x="7.5" y="677.5" width="8" height="6" fill="#f4f4f4" stroke="#23272e" stroke-width="1.3"/>
<rect x="27.5" y="668.5" width="72" height="21" rx="4" fill="#dcdcda" stroke="#c6c6c3"/>
<rect x="31.5" y="671.5" width="14" height="13" fill="#eef2f6" stroke="#5a6a7a"/>
<rect x="32" y="672" width="13" height="2" fill="#7a98b8"/>
<ellipse cx="41" cy="682" rx="5" ry="4" fill="#e8b24a" stroke="#a8741a" stroke-width="0.8"/>
<path d="M38.5 682h4" stroke="#fff" stroke-width="1"/>
<path d="M1061.5 683.2 L1064 688 L1058.5 684" fill="#dfe8f1" stroke="#4a5a6a" stroke-width="1"/>
<ellipse cx="1058.7" cy="678.5" rx="7.3" ry="5.6" fill="#dfe8f1" stroke="#4a5a6a" stroke-width="1"/>
<path d="M1061 683.6 L1063.5 687" stroke="#dfe8f1" stroke-width="1.2"/>
<text x="1058.7" y="682" text-anchor="middle" font-family="Liberation Sans" font-weight="bold" font-size="9.5" fill="#111">1</text>
<rect x="1071" y="671" width="1" height="18" fill="#cfcfcd"/>
<rect x="1215" y="671" width="1" height="18" fill="#cfcfcd"/>
<rect x="1247" y="671" width="1" height="18" fill="#cfcfcd"/>
</svg>
<div class="a tt" style="left:51px;top:671px;color:#111">Output</div>
<div class="a tt" style="left:1130px;top:671px;color:#2e3436">33:1</div>
<div class="a tt" style="left:1219px;top:671px;color:#2e3436">INS</div>
<svg class="a" style="left:1093px;top:38px" width="22" height="18" viewBox="1093 38 22 18">
<circle cx="1099" cy="44.5" r="4.3" fill="#d8e8f6" stroke="#1e2a36" stroke-width="1.6"/>
<path d="M1102 47.5 L1106 51.5" stroke="#1e2a36" stroke-width="2.4" stroke-linecap="round"/>
<path d="M1107 43.5h5l-2.5 3z" fill="#111"/>
</svg>

</body></html>
